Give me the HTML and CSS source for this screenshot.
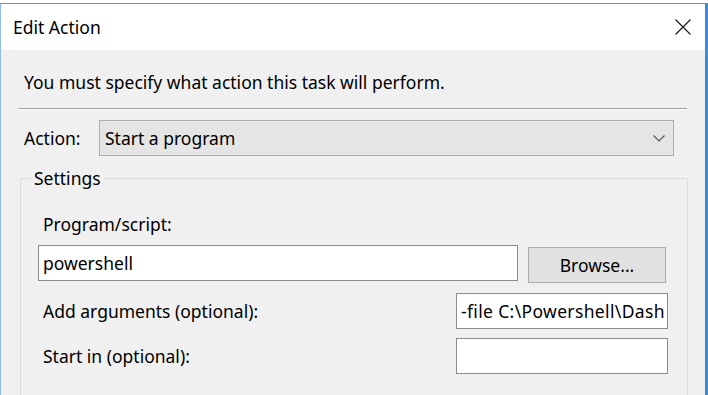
FILE: index.html
```html
<!DOCTYPE html>
<html>
<head>
<meta charset="utf-8">
<link rel="stylesheet" href="styles.css">
</head>
<body>
<div class="window">
  <div class="titlebar">
    <span class="title">Edit Action</span>
    <svg class="close" width="16" height="16" viewBox="0 0 16 16"><path d="M0.5 0.5 L15.5 15.5 M15.5 0.5 L0.5 15.5" stroke="#1a1a1a" stroke-width="1.2" fill="none"/></svg>
  </div>
  <div class="body">
    <p class="intro">You must specify what action this task will perform.</p>
    <div class="sep"></div>
    <div class="action-row">
      <span class="action-label">Action:</span>
      <div class="combo">
        <span>Start a program</span>
        <svg class="chevron" width="12" height="7" viewBox="0 0 12 7"><path d="M0.5 0.5 L6 6 L11.5 0.5" stroke="#555" stroke-width="1.2" fill="none"/></svg>
      </div>
    </div>
    <fieldset class="settings">
      <legend>Settings</legend>
      <div class="field-label">Program/script:</div>
      <div class="prog-row">
        <div class="textbox prog">powershell</div>
        <div class="button">Browse...</div>
      </div>
      <div class="arg-row first">
        <span class="field-label">Add arguments (optional):</span>
        <div class="textbox small args">-file C:\Powershell\Dash</div>
      </div>
      <div class="arg-row second">
        <span class="field-label">Start in (optional):</span>
        <div class="textbox small"></div>
      </div>
    </fieldset>
  </div>
</div>
</body>
</html>
```
FILE: styles.css
```css
html, body {
  margin: 0;
  padding: 0;
}
body {
  background: #ffffff;
  font-family: "Noto Sans", "Open Sans", sans-serif;
  font-size: 17.5px;
  line-height: 20px;
  color: #000;
  width: 708px;
  height: 395px;
  overflow: hidden;
}
.window {
  margin-top: 3px;
  width: 704px;
  height: 392px;
  border-top: 1px solid #4f97d8;
  border-left: 1px solid #8cbde8;
  border-right: 3px solid #3d8bd3;
  background: #f0f0f0;
  overflow: hidden;
}
.titlebar {
  height: 46px;
  background: #fff;
  display: flex;
  align-items: center;
  justify-content: space-between;
  padding: 0 14px 0 12px;
}
.close {
  display: block;
}
.body {
  background: #f0f0f0;
  padding: 22px 17px 0 19px;
}
.intro {
  margin: 0 0 0 4px;
  line-height: 20px;
}
.sep {
  height: 0;
  border-top: 1px solid #a0a0a0;
  border-bottom: 1px solid #ffffff;
  margin: 16px 1px 0 -1px;
}
.action-row {
  display: flex;
  align-items: center;
  margin: 10px 14px 0 0;
  padding-left: 4px;
}
.action-label {
  width: 75px;
}
.combo {
  flex: 1;
  height: 36px;
  box-sizing: border-box;
  border: 1px solid #adadad;
  background: #e5e5e5;
  display: flex;
  align-items: center;
  justify-content: space-between;
  padding: 0 8px 0 5px;
}
.chevron {
  display: block;
}
.settings {
  margin: 12px 0 0 0;
  min-width: 0;
  border: 1px solid #dcdcdc;
  padding: 26px 19px 40px 17px;
}
.settings legend {
  margin-left: -7px;
  padding: 0 3px;
  line-height: 20px;
}
.field-label {
  margin-left: 5px;
  line-height: 20px;
}
.prog-row {
  display: flex;
  align-items: flex-start;
  margin-top: 11px;
}
.textbox {
  height: 36px;
  box-sizing: border-box;
  border: 1px solid #8c8c8c;
  background: #fff;
  padding: 7px 0 0 4px;
  white-space: nowrap;
  overflow: hidden;
}
.args {
  letter-spacing: 0.35px;
}
.prog {
  flex: 1;
}
.button {
  width: 138px;
  height: 36px;
  box-sizing: border-box;
  margin: 2px 2px 0 10px;
  border: 1px solid #adadad;
  background: #e1e1e1;
  display: flex;
  align-items: center;
  justify-content: center;
}
.arg-row {
  display: flex;
  align-items: center;
  justify-content: space-between;
}
.arg-row.first {
  margin-top: 10px;
}
.arg-row.second {
  margin-top: 9px;
}
.small {
  width: 212px;
}
```
